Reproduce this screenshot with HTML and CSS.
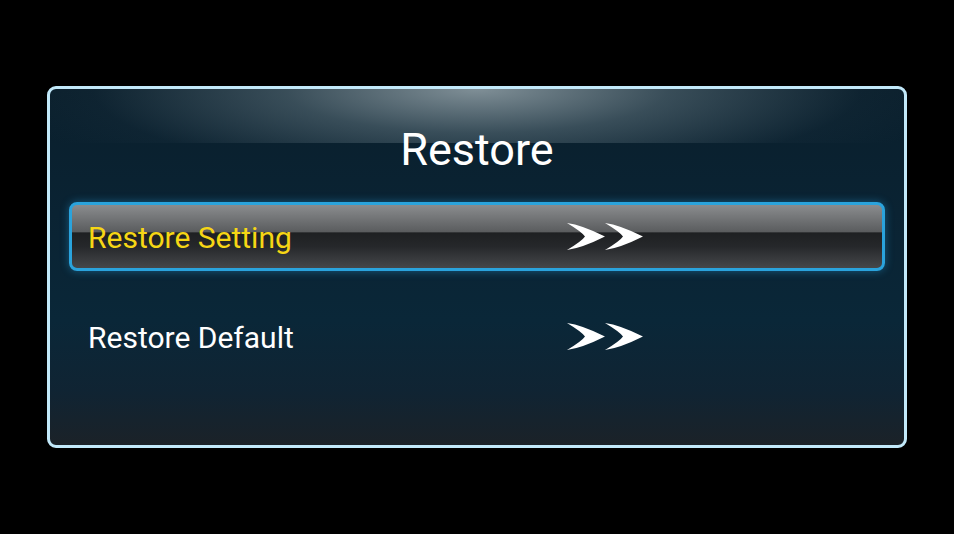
FILE: index.html
```html
<!DOCTYPE html>
<html>
<head>
<meta charset="utf-8">
<link rel="stylesheet" href="styles.css">
</head>
<body>
<div class="screen">
  <div class="panel">
    <div class="title">Restore</div>
    <div class="list">
      <div class="row selected">
        <span class="label">Restore Setting</span>
        <svg class="arrows" width="78" height="28" viewBox="0 0 78 28">
          <path d="M0,0 Q15,2 38,13.5 Q15,25 0,27 Q15,18 18,13.5 Q15,9 0,0 Z" fill="#fff"/>
          <path d="M38,0 Q53,2 76,13.5 Q53,25 38,27 Q53,18 56,13.5 Q53,9 38,0 Z" fill="#fff"/>
        </svg>
      </div>
      <div class="row">
        <span class="label">Restore Default</span>
        <svg class="arrows" width="78" height="28" viewBox="0 0 78 28">
          <path d="M0,0 Q15,2 38,13.5 Q15,25 0,27 Q15,18 18,13.5 Q15,9 0,0 Z" fill="#fff"/>
          <path d="M38,0 Q53,2 76,13.5 Q53,25 38,27 Q53,18 56,13.5 Q53,9 38,0 Z" fill="#fff"/>
        </svg>
      </div>
    </div>
  </div>
</div>
</body>
</html>
```
FILE: styles.css
```css
html, body {
  margin: 0;
  padding: 0;
  background: #000;
  width: 954px;
  height: 534px;
  overflow: hidden;
  font-family: Roboto, "Liberation Sans", sans-serif;
}
.screen {
  padding: 86px 0 0 47px;
}
.panel {
  box-sizing: border-box;
  width: 860px;
  height: 362px;
  border: 3px solid #c2e9fa;
  border-radius: 9px;
  background:
    radial-gradient(ellipse 480px 110px at 50% 0, rgba(140,155,162,0.9) 0%, rgba(95,115,125,0.55) 40%, rgba(40,60,75,0.15) 80%, rgba(40,60,75,0) 100%) 0 0 / 100% 54px no-repeat,
    linear-gradient(to bottom, #0a1f2c 0%, #0a2333 35%, #0a2738 65%, #102433 85%, #1b2228 100%);
}
.title {
  padding-top: 35px;
  height: 52px;
  line-height: 52px;
  text-align: center;
  color: #fff;
  font-size: 45px;
}
.list {
  margin-top: 26px;
  padding: 0 19px;
  display: flex;
  flex-direction: column;
  gap: 31px;
}
.row {
  box-sizing: border-box;
  height: 69px;
  border: 3px solid transparent;
  border-radius: 8px;
  padding-left: 16px;
  display: grid;
  grid-template-columns: 479px auto;
  align-items: center;
  color: #fff;
  font-size: 30px;
}
.row.selected {
  border-color: #2aa3dc;
  color: #f6d615;
  background: linear-gradient(to bottom, #8a8c8e 0%, #6e7072 25%, #5a5c5e 43%, #1e2022 44%, #25272a 65%, #45474a 100%);
  box-shadow: 0 0 8px rgba(40,160,220,0.45);
}
.label {
  line-height: 34px;
  padding-top: 3px;
}
.arrows {
  display: block;
}
```
